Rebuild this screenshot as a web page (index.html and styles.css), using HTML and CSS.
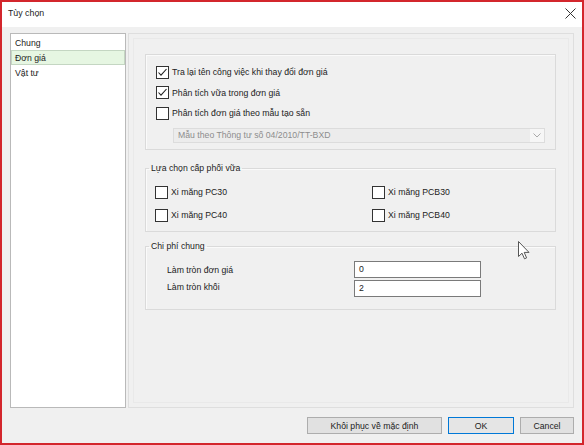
FILE: index.html
```html
<!DOCTYPE html>
<html>
<head>
<meta charset="utf-8">
<link rel="stylesheet" href="styles.css">
</head>
<body>
<div class="window">
  <div class="titlebar">
    <span class="title">Tùy chọn</span>
    <svg class="close" width="11" height="11" viewBox="0 0 11 11"><path d="M0.5 0.5L10.5 10.5M10.5 0.5L0.5 10.5" stroke="#333" stroke-width="1" fill="none"/></svg>
  </div>
  <div class="main">
    <div class="content">
      <div class="list">
        <div class="item">Chung</div>
        <div class="item selected">Đơn giá</div>
        <div class="item">Vật tư</div>
      </div>
      <div class="panel">
        <div class="group g1">
          <label class="row"><span class="cb checked"><svg width="11" height="11" viewBox="0 0 11 11"><path d="M1.5 5.5L4 8.2L9.5 2" stroke="#222" stroke-width="1.1" fill="none"/></svg></span>Tra lại tên công việc khi thay đổi đơn giá</label>
          <label class="row"><span class="cb checked"><svg width="11" height="11" viewBox="0 0 11 11"><path d="M1.5 5.5L4 8.2L9.5 2" stroke="#222" stroke-width="1.1" fill="none"/></svg></span>Phân tích vữa trong đơn giá</label>
          <label class="row"><span class="cb"></span>Phân tích đơn giá theo mẫu tạo sẵn</label>
          <div class="select"><span>Mẫu theo Thông tư số 04/2010/TT-BXD</span><span class="arrow"><svg width="8" height="5" viewBox="0 0 8 5"><path d="M0.5 0.5L4 4L7.5 0.5" stroke="#aaa" fill="none"/></svg></span></div>
        </div>
        <fieldset class="group g2">
          <legend>Lựa chọn cấp phối vữa</legend>
          <div class="grid">
            <label class="row"><span class="cb"></span>Xi măng PC30</label>
            <label class="row"><span class="cb"></span>Xi măng PCB30</label>
            <label class="row"><span class="cb"></span>Xi măng PC40</label>
            <label class="row"><span class="cb"></span>Xi măng PCB40</label>
          </div>
        </fieldset>
        <fieldset class="group g3">
          <legend>Chi phí chung</legend>
          <div class="field"><span class="lbl">Làm tròn đơn giá</span><span class="input">0</span></div>
          <div class="field f2"><span class="lbl">Làm tròn khối</span><span class="input">2</span></div>
        </fieldset>
      </div>
    </div>
    <div class="footer">
      <button class="btn b1">Khôi phục về mặc định</button>
      <button class="btn ok">OK</button>
      <button class="btn cancel">Cancel</button>
    </div>
  </div>
  <svg class="cursor" width="12" height="19" viewBox="0 0 12 19"><path d="M0.5 0.5L0.5 15.5L4 12.2L6.5 17.8L8.6 16.9L6.2 11.4L11 11.4Z" fill="#fff" stroke="#555" stroke-width="1"/></svg>
</div>
</body>
</html>
```
FILE: styles.css
```css
html, body { margin: 0; padding: 0; }
body {
  font-family: "Liberation Sans", Arial, sans-serif;
  font-size: 8.7px;
  color: #222;
}
.window {
  position: relative;
  width: 584px;
  height: 445px;
  box-sizing: border-box;
  border: 2px solid #d3262c;
  display: flex;
  flex-direction: column;
  background: #f0f0f0;
}
.titlebar {
  height: 25px;
  background: #fff;
  display: flex;
  align-items: center;
  justify-content: space-between;
  padding: 0 6px 3px 6px;
  box-sizing: border-box;
  flex: none;
}
.title { font-size: 8.8px; color: #222; }
.main {
  flex: 1;
  display: flex;
  flex-direction: column;
  padding: 6px 8px 0 8px;
}
.content {
  display: flex;
  height: 375px;
}
.list {
  width: 116px;
  box-sizing: border-box;
  border: 1px solid #b9b9b9;
  background: #fff;
  padding-top: 1px;
  flex: none;
}
.item {
  height: 15px;
  line-height: 14px;
  padding-left: 3px;
  box-sizing: border-box;
  border: 1px solid transparent;
}
.item.selected {
  background: #e6f6e2;
  border-color: #c4d6c2;
}
.panel {
  flex: 1;
  margin-left: 2px;
  border: 1px solid #dedede;
  box-shadow: inset 0 0 0 4px #f0f0f0, inset 0 0 0 5px #e9e9e9;
  padding: 20px 17px 0 16px;
}
.group {
  border: 1px solid #dadada;
  box-shadow: inset 1px 1px 0 #fafafa;
  margin: 0;
  box-sizing: border-box;
}
.g1 {
  height: 96px;
  padding: 7px 0 0 10px;
}
.row {
  display: flex;
  align-items: center;
  height: 20px;
  white-space: nowrap;
}
.cb {
  width: 11px;
  height: 11px;
  border: 1px solid #333;
  background: #fff;
  margin-right: 3px;
  display: flex;
  align-items: center;
  justify-content: center;
  flex: none;
}
.cb svg { display: block; }
.g1 .row { height: 20.5px; }
.select {
  margin: 4px 0 0 17px;
  width: 372px;
  height: 15px;
  box-sizing: border-box;
  border: 1px solid #dcdcdc;
  background: #ececec;
  color: #8d8d8d;
  display: flex;
  align-items: center;
  justify-content: space-between;
  padding-left: 4px;
}
.arrow {
  width: 14px;
  height: 13px;
  background: #f6f6f6;
  display: flex;
  align-items: center;
  justify-content: center;
}
fieldset.group {
  padding: 0 0 0 9px;
  min-width: 0;
}
legend {
  padding: 0 2px;
  margin-left: -6px;
  line-height: 12px;
  color: #222;
}
.g2 {
  margin-top: 12px;
  height: 70px;
}
.grid {
  display: grid;
  grid-template-columns: 217px 1fr;
  row-gap: 3px;
  padding-top: 8px;
}
.g3 {
  margin-top: 8px;
  height: 70px;
}
.field {
  display: flex;
  align-items: center;
  margin-left: 12px;
  margin-top: 9px;
  height: 17px;
}
.field.f2 { margin-top: 2px; }
.lbl { width: 187px; }
.f2 .lbl { position: relative; top: -2px; }
.input {
  width: 127px;
  height: 17px;
  box-sizing: border-box;
  border: 1px solid #7a7a7a;
  background: #fff;
  padding-left: 4px;
  line-height: 15px;
}
.footer {
  display: flex;
  justify-content: flex-end;
  gap: 6px;
  padding-top: 9px;
  padding-right: 0px;
}
.btn {
  height: 17px;
  box-sizing: border-box;
  border: 1px solid #adadad;
  background: #e1e1e1;
  font-family: inherit;
  font-size: 8.7px;
  color: #222;
  padding: 0;
  line-height: 14px;
}
.b1 { width: 135px; }
.ok { width: 66px; border-color: #0078d7; background: #e5e5e5; }
.cancel { width: 54px; }
.cursor {
  position: absolute;
  left: 516px;
  top: 239px;
}
```
